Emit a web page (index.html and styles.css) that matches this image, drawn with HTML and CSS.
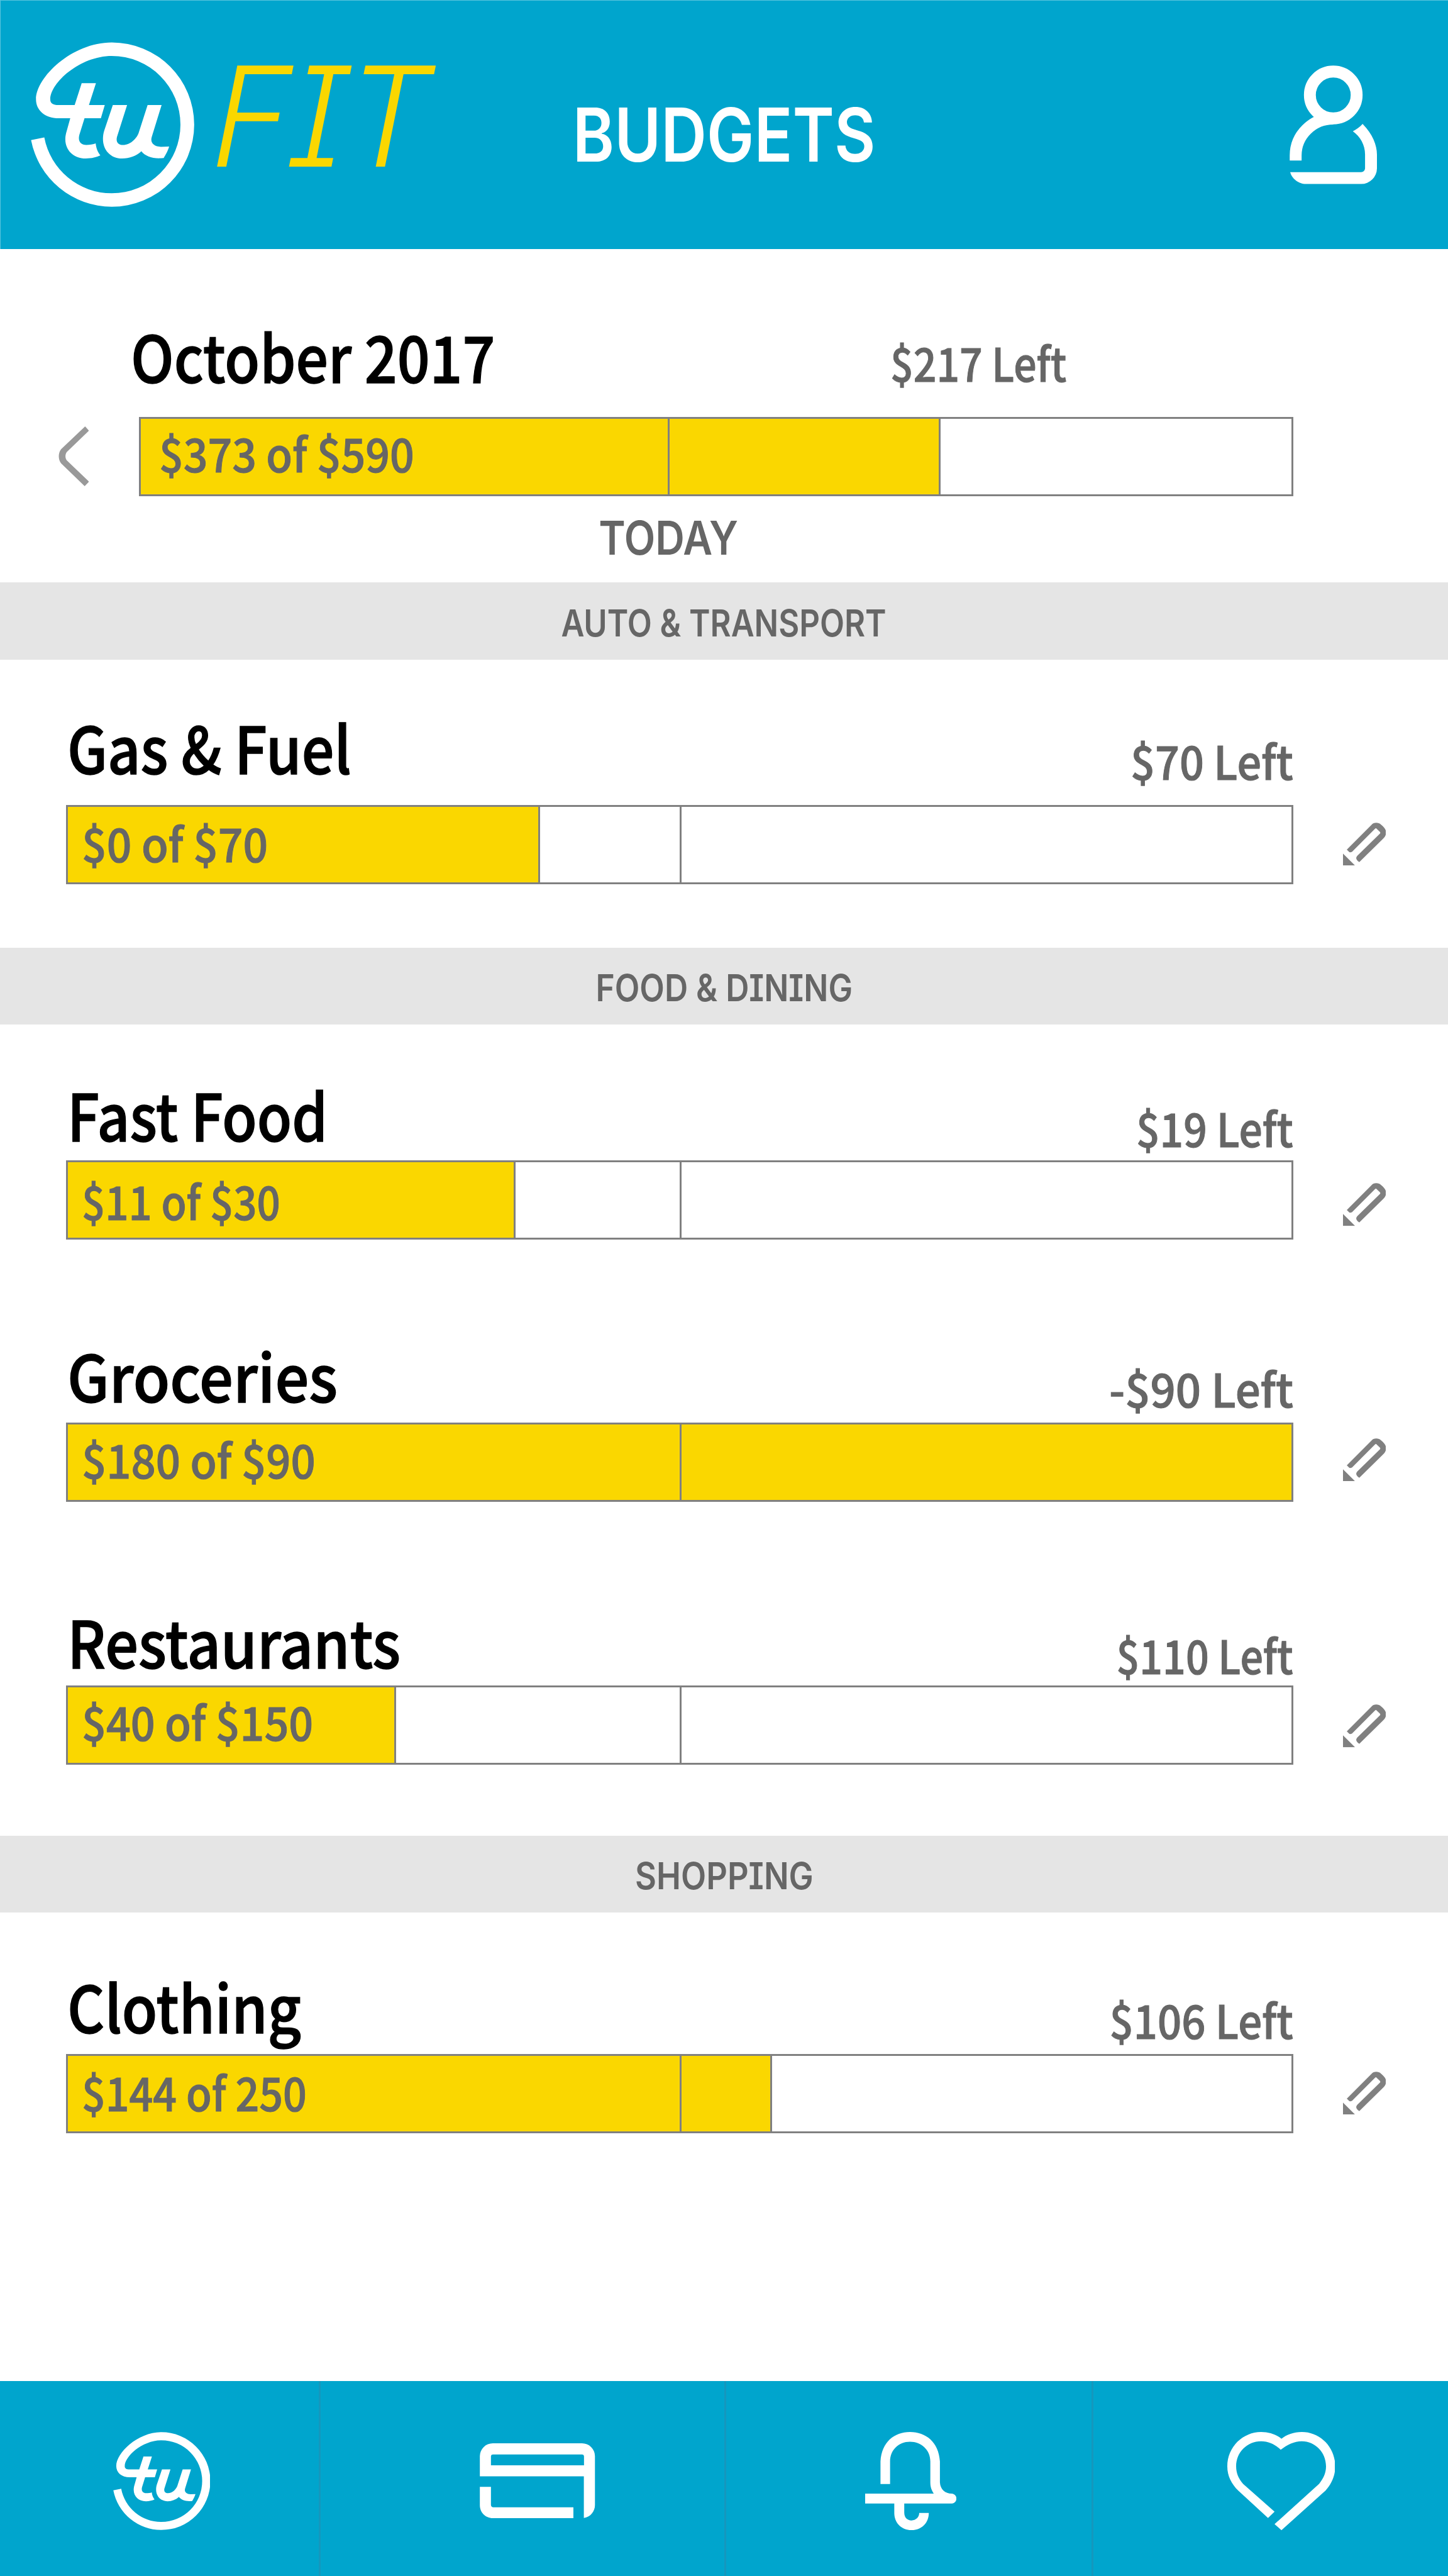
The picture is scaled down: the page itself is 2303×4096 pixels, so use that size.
FILE: index.html
```html
<!DOCTYPE html>
<html lang="en">
<head>
<meta charset="utf-8">
<title>Budgets</title>
<link rel="stylesheet" href="styles.css">
</head>
<body>
<svg class="defs" aria-hidden="true">
  <symbol id="tu" viewBox="131 205 630 635">
    <path d="M132 582L183 572A264.500 264.500 0 0 0 443 787A264.500 264.500 0 0 0 443 258C320 258 206 362 206 425C206 440 215 447 238 447H300L327 363H382L355 447H416L401 498H338L318 562C312 585 322 601 345 601C358 601 372 599 381 595C383 615 390 630 399 641C385 648 365 653 343 653C295 653 263 620 264 577C264 568 266 558 269 548L283 498H240C183 498 151 465 151 425C151 340 290 206 443 206A317.500 316.500 0 0 1 760.500 522.500A317.500 316.500 0 0 1 443 839A317 317 0 0 1 132 582Z"/>
    <path d="M447 447H502L463 570C458 590 468 601 486 601C515 601 540 575 547 553L581 447H635L597 570C590 592 605 607 632 608L664 607C660 622 650 640 643 651C605 656 572 645 557 625C537 643 512 653 483 653C438 653 409 620 409 577C409 565 411 555 414 545Z"/>
  </symbol>
  <symbol id="pencil" viewBox="1174 645 182 278" preserveAspectRatio="none">
    <path d="M1174 845L1225 922H1174ZM1190 820L1294 660C1302 642 1325 642 1334 657C1350 677 1356 692 1356 710C1356 725 1351 738 1343 750L1243 900C1234 890 1230 882 1230 874C1230 868 1232 863 1235 858L1330 716C1332 713 1332 709 1330 705L1314 682Q1312 681 1310 684L1212 834Q1206 838 1201 836Z"/>
  </symbol>
</svg>

<header class="header">
  <div class="brand">
    <svg class="brand-logo"><use href="#tu"/></svg>
    <span class="brand-fit">FIT</span>
  </div>
  <h1 class="page-title"><span class="t" style="--sx:.849">BUDGETS</span></h1>
  <svg class="user" viewBox="251 183 566 769">
    <circle cx="534" cy="374.500" r="151.500" fill="none" stroke="currentColor" stroke-width="77"/>
    <path d="M290.500 799V766A243.500 239 0 0 1 534 527" fill="none" stroke="currentColor" stroke-width="77"/>
    <path d="M724 562C790 630 817 700 817 760V850A102 102 0 0 1 715 951H357C310 951 265 915 255 874H715A25 25 0 0 0 740 850V760C740 700 710 645 661 610C685 598 707 581 724 562Z"/>
  </svg>
</header>

<main>
  <section class="month">
    <div class="month-head">
      <h2 class="name"><span class="t" style="--sx:.888">October 2017</span></h2>
      <span class="left"><span class="t" style="--sx:.874">$217 Left</span></span>
    </div>
    <div class="month-row">
      <svg class="prev" viewBox="47 510 70 252" preserveAspectRatio="none"><path d="M108 510L117 528L66 618C62 628 62 644 66 653L117 743L107 762L53 666C46 650 46 622 53 606Z"/></svg>
      <div class="bar"><div class="fill" style="width:69.5%"></div><i class="tick"></i><span class="amount"><span class="t" style="--sx:.923">$373 of $590</span></span></div>
    </div>
    <div class="today"><span class="t" style="--sx:.866">TODAY</span></div>
  </section>

  <h3 class="band"><span class="t" style="--sx:.862">AUTO &amp; TRANSPORT</span></h3>
  <section class="item gas">
    <div class="head"><h2 class="name"><span class="t" style="--sx:.891">Gas &amp; Fuel</span></h2><span class="left"><span class="t" style="--sx:.928">$70 Left</span></span></div>
    <div class="row"><div class="bar"><div class="fill" style="width:38.62%"></div><i class="tick"></i><span class="amount"><span class="t" style="--sx:.944">$0 of $70</span></span></div><svg class="edit"><use href="#pencil"/></svg></div>
  </section>

  <h3 class="band"><span class="t" style="--sx:.874">FOOD &amp; DINING</span></h3>
  <section class="item fast">
    <div class="head"><h2 class="name"><span class="t" style="--sx:.88">Fast Food</span></h2><span class="left"><span class="t" style="--sx:.896">$19 Left</span></span></div>
    <div class="row"><div class="bar"><div class="fill" style="width:36.6%"></div><i class="tick"></i><span class="amount"><span class="t" style="--sx:.888">$11 of $30</span></span></div><svg class="edit"><use href="#pencil"/></svg></div>
  </section>
  <section class="item groceries">
    <div class="head"><h2 class="name"><span class="t" style="--sx:.929">Groceries</span></h2><span class="left"><span class="t" style="--sx:.961">-$90 Left</span></span></div>
    <div class="row"><div class="bar"><div class="fill full" style="width:100%"></div><i class="tick"></i><span class="amount"><span class="t" style="--sx:.935">$180 of $90</span></span></div><svg class="edit"><use href="#pencil"/></svg></div>
  </section>
  <section class="item restaurants">
    <div class="head"><h2 class="name"><span class="t" style="--sx:.91">Restaurants</span></h2><span class="left"><span class="t" style="--sx:.877">$110 Left</span></span></div>
    <div class="row"><div class="bar"><div class="fill" style="width:26.85%"></div><i class="tick"></i><span class="amount"><span class="t" style="--sx:.926">$40 of $150</span></span></div><svg class="edit"><use href="#pencil"/></svg></div>
  </section>

  <h3 class="band"><span class="t" style="--sx:.887">SHOPPING</span></h3>
  <section class="item clothing">
    <div class="head"><h2 class="name"><span class="t" style="--sx:.897">Clothing</span></h2><span class="left"><span class="t" style="--sx:.911">$106 Left</span></span></div>
    <div class="row"><div class="bar"><div class="fill" style="width:57.57%"></div><i class="tick"></i><span class="amount"><span class="t" style="--sx:.9">$144 of 250</span></span></div><svg class="edit"><use href="#pencil"/></svg></div>
  </section>
</main>

<nav class="tabs">
  <a class="tab tab-home"><svg><use href="#tu"/></svg></a>
  <a class="tab tab-card"><svg viewBox="259 279 747 487"><path fill-rule="evenodd" d="M259 493V362A84 84 0 0 1 343 279H922A84 84 0 0 1 1006 362V680C1006 720 978 757 934 764V493ZM331 422H935V365Q935 351 921 351H345Q331 351 331 365ZM259 562H331V680Q333 693 346 694H866V765H343C295 763 259 728 259 680Z"/></svg></a>
  <a class="tab tab-alerts"><svg viewBox="142 205 238 634" preserveAspectRatio="none"><path d="M182 541V395C185 270 218 205 259 205C300 205 334 270 337 395V530C338 580 353 605 369 603C377 608 380 620 380 635C380 652 376 663 369 667H244V725C244 760 252 776 263 776C274 776 283 755 283 728H308C308 795 288 839 263 839C238 839 218 795 218 728V667H142V603H321C315 580 312 560 312 530V395C312 320 288 268 259 268C230 268 207 320 207 395V541Z"/></svg></a>
  <a class="tab tab-health"><svg viewBox="1084 205 281 634" preserveAspectRatio="none"><path d="M1190 760L1113 585C1095 540 1084 490 1084 427C1084 300 1125 205 1172 205C1193 205 1212 222 1225 249C1238 222 1257 205 1278 205C1325 205 1365 300 1365 427C1365 490 1355 540 1340 583L1225 839L1207 800L1323 540C1334 505 1341 470 1341 427C1341 335 1312 265 1278 265C1258 265 1240 288 1223 320C1210 288 1192 265 1172 265C1136 265 1107 335 1107 427C1107 470 1113 505 1125 540L1207 720Z"/></svg></a>
</nav>
</body>
</html>
```
FILE: styles.css
```css
/* 1rem is 1/31.26 of the window's width, so the whole screen scales with it */
:root {
  --blue: #00a5cd;
  --yellow: #fad700;
  --line: #808080;
  --text: #666;
  font-size: calc(100vw / 31.26);
}

* { box-sizing: border-box; margin: 0; }

body {
  display: flex;
  flex-direction: column;
  height: 100vh;
  overflow: hidden;
  background: #fff;
  color: var(--text);
  font-family: Inter, sans-serif;
  font-weight: 600;
  font-size: 1.01rem;
  line-height: 1;
  font-feature-settings: "cv05", "cv08", "ss04";
  white-space: nowrap;
}

svg { display: block; fill: currentColor; flex: none; }
.defs { display: none; }

/* condensed label: --sx is its horizontal scale */
.t { display: inline-block; transform: scaleX(var(--sx, 0.85)); transform-origin: 0 50%; }

.header {
  display: grid;
  grid-template-columns: 1fr auto 1fr;
  height: 5.38rem;
  flex: none;
  background: var(--blue);
  box-shadow: inset 1px 1px 0 rgba(255, 255, 255, 0.35);
  color: #fff;
}
.brand { display: flex; padding-left: 0.67rem; }
.brand-logo { width: 3.53rem; height: 3.56rem; margin-top: 0.91rem; }
.brand-fit {
  margin: 1rem 0 0 0.29rem;
  color: var(--yellow);
  font-size: 3rem;
  font-style: italic;
  font-weight: 285;
  transform: scaleX(0.955) skewX(-2.5deg);
  transform-origin: 0 86%;
}
.page-title { margin-top: 2.11rem; font-size: 1.61rem; font-weight: 600; }
.page-title .t { transform-origin: 50% 50%; }
.user { justify-self: end; width: 1.887rem; height: 2.563rem; margin: 1.41rem 1.54rem 0 0; }

.name, .left, .amount {
  font-family: "Noto Sans CJK SC", sans-serif;
  font-weight: 500;
  font-size: 1rem;
  line-height: 1.01;
  -webkit-text-stroke: 0.014em currentColor;
}
.name { color: #000; font-size: 1.392rem; line-height: 1.0057; }
.name .t { translate: 0 calc(0.035rem - 0.07em); }
.left .t { translate: 0 calc(0.025rem - 0.07em); }
.amount .t { translate: 0 -0.07em; }

.bar {
  position: relative;
  flex: none;
  width: 26.5rem;
  height: 1.71rem;
  border: 0.041rem solid var(--line);
}
.fill { height: 100%; background: var(--yellow); border-right: 0.041rem solid var(--line); }
.fill.full { border-right: 0; }
.tick { position: absolute; top: 0; bottom: 0; left: 50%; width: 0.041rem; background: var(--line); }
.amount { position: absolute; left: 0.31rem; top: 0.32rem; }

.month { height: 7.195rem; padding: 1.65rem 0 0 1.26rem; }
.month-head { display: flex; align-items: flex-start; height: 1.4rem; padding-left: 1.56rem; }
.month-head .name { width: 16.4rem; }
.month-head .left { margin-top: 0.32rem; }
.month-row { display: flex; margin-top: 0.57rem; }
.prev { width: 0.66rem; height: 1.29rem; margin: 0.2rem 1.08rem 0 0; color: #999; }
.month .bar { width: 24.92rem; }
.month .tick { left: 45.8%; }
.month .amount { left: 0.4rem; top: 0.28rem; }
.today { width: 26.33rem; margin-top: 0.4rem; text-align: center; }
.today .t, .band .t { transform-origin: 50% 50%; }

.band {
  display: flex;
  align-items: center;
  justify-content: center;
  height: 1.665rem;
  padding-top: 0.09rem;
  background: #e5e5e5;
  font-size: 0.8rem;
  font-weight: 600;
}

.item { padding-left: 1.42rem; }
.head { display: flex; justify-content: space-between; align-items: flex-end; width: 26.5rem; }
.head .name { margin: 0 0 0.07rem 0.03rem; }
.head .left .t { transform-origin: 100% 50%; }
.row { display: flex; align-items: flex-start; }
.edit { width: 0.93rem; height: 0.93rem; margin-left: 1.07rem; color: var(--line); }

.gas { padding-top: 1.24rem; padding-bottom: 1.36rem; }
.gas .row { margin-top: 0.43rem; }
.gas .edit { margin-top: 0.37rem; }
.fast { padding-top: 1.285rem; }
.fast .row { margin-top: 0.18rem; }
.fast .edit { margin-top: 0.49rem; }
.fast .amount { top: 0.37rem; }
.groceries { padding-top: 2.27rem; }
.groceries .row { margin-top: 0.21rem; }
.groceries .edit { margin-top: 0.33rem; }
.groceries .amount { top: 0.29rem; }
.restaurants { padding-top: 2.36rem; padding-bottom: 1.53rem; }
.restaurants .row { margin-top: 0.13rem; }
.restaurants .edit { margin-top: 0.41rem; }
.restaurants .amount { top: 0.28rem; }
.clothing { padding-top: 1.365rem; }
.clothing .row { margin-top: 0.22rem; }
.clothing .edit { margin-top: 0.37rem; }

.tabs {
  display: grid;
  grid-template-columns: 6.92rem 8.76rem 7.92rem 1fr;
  height: 4.21rem;
  margin-top: auto;
  flex: none;
  background: var(--blue);
  color: #fff;
}
.tab { padding-top: 1.1rem; border-right: 0.041rem solid #1597bd; }
.tab:last-child { border-right: 0; }
.tab svg { height: 2.12rem; }
.tab-home svg { width: 2.1rem; margin-left: 2.44rem; }
.tab-card svg { width: 2.49rem; height: 1.62rem; margin: 0.25rem 0 0 3.44rem; }
.tab-alerts svg { width: 1.97rem; margin-left: 3rem; }
.tab-health svg { width: 2.33rem; margin-left: 2.89rem; }
```
